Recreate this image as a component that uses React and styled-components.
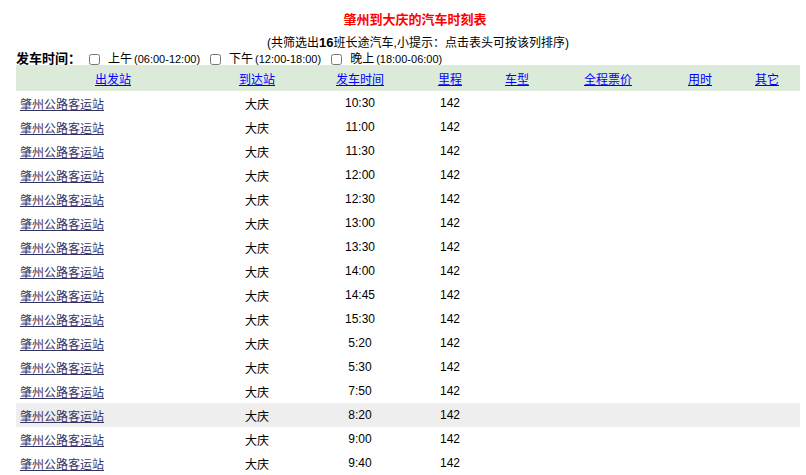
import React from 'react';
import styled, { createGlobalStyle } from 'styled-components';

const Global = createGlobalStyle`
  body {
    margin: 0;
    font-family: "Liberation Sans", "Noto Sans CJK SC", sans-serif;
    font-size: 12px;
    color: #000;
    background: #fff;
  }
`;

const Page = styled.div`
  padding: 10px 0 0 16px;
  width: 790px;
`;

const Title = styled.div`
  text-align: center;
  color: #f00;
  font-weight: bold;
  font-size: 13px;
  line-height: 20px;
  padding-left: 8px;
`;

const Summary = styled.div`
  text-align: center;
  line-height: 18px;
  margin-top: 4px;
  padding-left: 14px;
  b { font-size: 13px; }
`;

const Filter = styled.div`
  display: flex;
  align-items: center;
  line-height: 14px;
  height: 14px;
  label { display: flex; align-items: center; margin-right: 4px; }
  input { width: 11px; height: 11px; margin: 0 8px 0 6px; }
  small { font-size: 11px; margin-left: 2px; }
`;

const FilterLabel = styled.b`
  font-size: 13px;
  margin-right: 2px;
`;

const Table = styled.table`
  border-collapse: collapse;
  width: 784px;
  margin-top: -1px;
  table-layout: fixed;
`;

const Head = styled.th`
  background: #dcebd9;
  height: 24px;
  font-weight: normal;
  text-align: center;
  a { color: #00f; text-decoration: underline; }
`;

const Row = styled.tr`
  background: ${p => (p.$hl ? '#eeeeee' : 'transparent')};
`;

const Cell = styled.td`
  height: 24px;
  padding: 0 4px;
  text-align: ${p => p.$align || 'center'};
  a { color: #336; text-decoration: underline; }
`;

const cols = [
  ['出发站', 194], ['到达站', 94], ['发车时间', 112], ['里程', 68],
  ['车型', 66], ['全程票价', 116], ['用时', 68], ['其它', 66],
];

const times = ['10:30', '11:00', '11:30', '12:00', '12:30', '13:00', '13:30', '14:00',
  '14:45', '15:30', '5:20', '5:30', '7:50', '8:20', '9:00', '9:40'];

export default function App() {
  return (
    <Page>
      <Global />
      <Title>肇州到大庆的汽车时刻表</Title>
      <Summary>(共筛选出<b>16</b>班长途汽车,小提示：点击表头可按该列排序)</Summary>
      <Filter>
        <FilterLabel>发车时间：</FilterLabel>
        <label><input type="checkbox" />上午<small>(06:00-12:00)</small></label>
        <label><input type="checkbox" />下午<small>(12:00-18:00)</small></label>
        <label><input type="checkbox" />晚上<small>(18:00-06:00)</small></label>
      </Filter>
      <Table>
        <colgroup>
          {cols.map(([n, w]) => <col key={n} style={{ width: w }} />)}
        </colgroup>
        <thead>
          <tr>
            {cols.map(([n]) => <Head key={n}><a href="#">{n}</a></Head>)}
          </tr>
        </thead>
        <tbody>
          {times.map((t, i) => (
            <Row key={t} $hl={i === 13}>
              <Cell $align="left"><a href="#">肇州公路客运站</a></Cell>
              <Cell>大庆</Cell>
              <Cell>{t}</Cell>
              <Cell>142</Cell>
              <Cell /><Cell /><Cell /><Cell />
            </Row>
          ))}
        </tbody>
      </Table>
    </Page>
  );
}
